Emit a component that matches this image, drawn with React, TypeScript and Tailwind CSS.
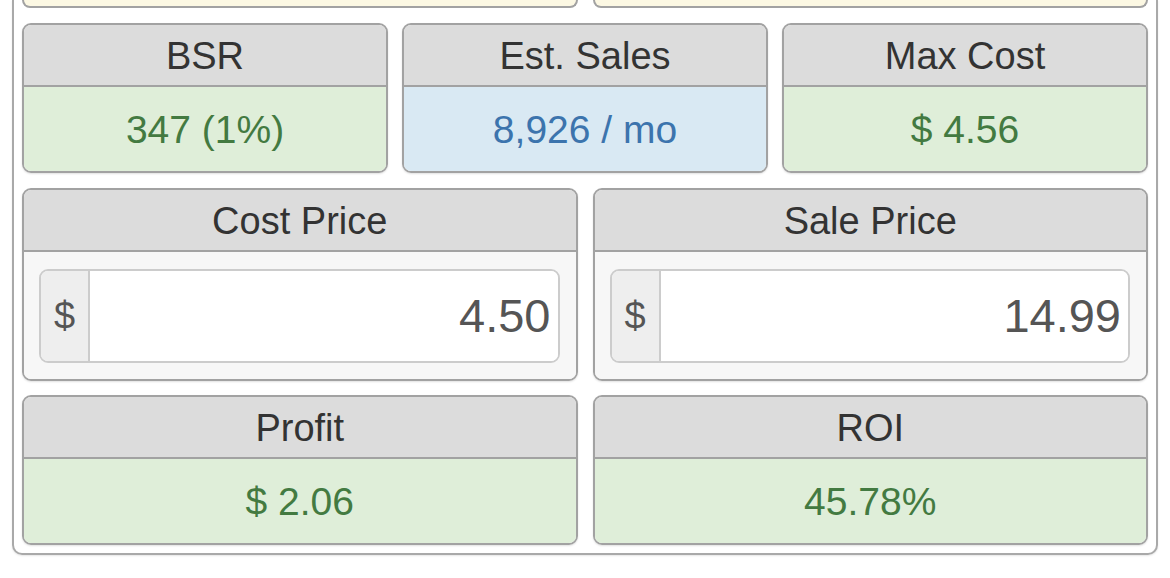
import {FC} from 'react';

type Tone = 'green' | 'blue';

const toneClass: Record<Tone, string> = {
  green: 'bg-[#dfeed9] text-[#437a41]',
  blue: 'bg-[#d9e9f3] text-[#3c74ad]',
};

const StatCard: FC<{label: string; value: string; tone: Tone}> = ({label, value, tone}) => (
  <div className="flex flex-1 flex-col overflow-hidden rounded-[9px] border-2 border-[#a2a2a2] shadow-[0_1px_2px_rgba(0,0,0,0.12)]">
    <div className="flex h-[62px] items-center justify-center border-b-2 border-[#a2a2a2] bg-[#dcdcdc] pt-[2px] text-[38px] leading-none text-[#333]">
      {label}
    </div>
    <div className={`flex h-[84px] items-center justify-center text-[39px] leading-none ${toneClass[tone]}`}>{value}</div>
  </div>
);

const PriceCard: FC<{label: string; value: string}> = ({label, value}) => (
  <div className="flex flex-1 flex-col overflow-hidden rounded-[9px] border-2 border-[#a2a2a2] shadow-[0_1px_2px_rgba(0,0,0,0.12)]">
    <div className="flex h-[62px] items-center justify-center border-b-2 border-[#a2a2a2] bg-[#dcdcdc] pt-[2px] text-[38px] leading-none text-[#333]">
      {label}
    </div>
    <div className="flex h-[127px] items-center bg-[#f7f7f7] pl-[15px] pr-[16px]">
      <div className="flex h-[94px] w-full overflow-hidden rounded-[9px] border-2 border-[#cccccc] bg-white">
        <span className="flex w-[49px] shrink-0 items-center justify-center border-r-2 border-[#cccccc] bg-[#eeeeee] text-[38px] leading-none text-[#555]">
          $
        </span>
        <input
          className="w-full min-w-0 bg-white pr-[7px] text-right text-[47px] leading-none text-[#555] outline-none"
          defaultValue={value}
          readOnly
        />
      </div>
    </div>
  </div>
);

const App: FC = () => {
  return (
    <div className="h-[578px] w-[1170px] bg-white" style={{fontFamily: '"Liberation Sans", Arial, sans-serif'}}>
      <div className="ml-[12px] w-[1146px] rounded-b-[10px] border-x-2 border-b-2 border-[#a9a9a9] px-[8px] pb-[8px] shadow-[0_1px_2px_rgba(0,0,0,0.1)]">
        {/* tail of the row above, cut off by the viewport */}
        <div className="flex gap-[15px]">
          <div className="h-[8px] flex-1 rounded-b-[9px] border-x-2 border-b-2 border-[#a2a2a2] bg-[#fcf8e3]" />
          <div className="h-[8px] flex-1 rounded-b-[9px] border-x-2 border-b-2 border-[#a2a2a2] bg-[#fcf8e3]" />
        </div>
        <div className="mt-[15px] flex gap-[14px]">
          <StatCard label="BSR" value="347 (1%)" tone="green" />
          <StatCard label="Est. Sales" value="8,926 / mo" tone="blue" />
          <StatCard label="Max Cost" value="$ 4.56" tone="green" />
        </div>
        <div className="mt-[15px] flex gap-[15px]">
          <PriceCard label="Cost Price" value="4.50" />
          <PriceCard label="Sale Price" value="14.99" />
        </div>
        <div className="mt-[14px] flex gap-[15px]">
          <StatCard label="Profit" value="$ 2.06" tone="green" />
          <StatCard label="ROI" value="45.78%" tone="green" />
        </div>
      </div>
    </div>
  );
};

export default App;
